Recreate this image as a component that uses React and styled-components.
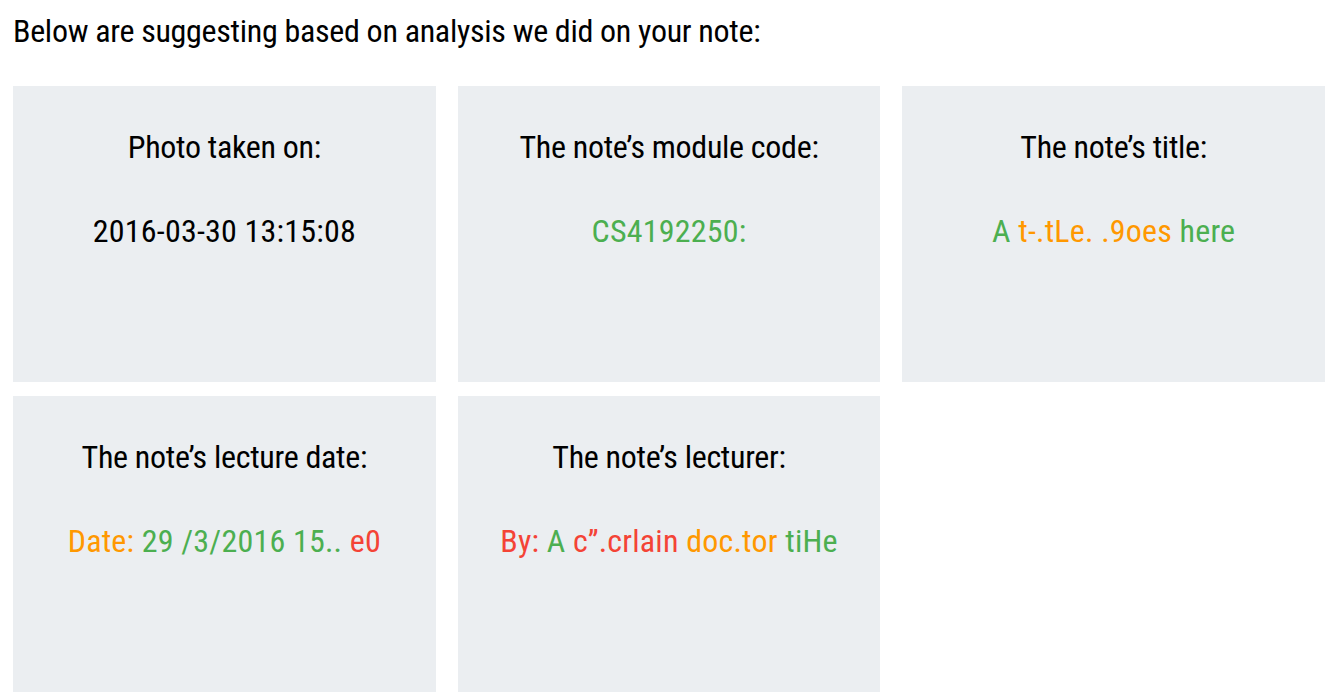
import React from 'react';
import styled, { createGlobalStyle } from 'styled-components';

const GlobalStyle = createGlobalStyle`
  body {
    margin: 0;
    background: #ffffff;
    font-family: "Roboto Condensed", "Open Sans Condensed", "DejaVu Sans Condensed", sans-serif;
    color: #000000;
  }
`;

const Page = styled.div`
  padding: 11px 5px 0 13px;
`;

const Intro = styled.p`
  font-size: 32px;
  line-height: 40px;
  letter-spacing: -0.3px;
  margin: 0 0 35px 0;
`;

const CardGrid = styled.div`
  display: grid;
  grid-template-columns: repeat(3, 1fr);
  column-gap: 22px;
  row-gap: 14px;
`;

const Card = styled.div`
  background: #ebeef1;
  height: 296px;
  padding: 41px 16px 0;
  box-sizing: border-box;
  text-align: center;
`;

const CardTitle = styled.h3`
  font-size: 32px;
  font-weight: normal;
  line-height: 40px;
  letter-spacing: -0.3px;
  margin: 0 0 44px 0;
`;

const CardValue = styled.p`
  font-size: 32px;
  line-height: 40px;
  letter-spacing: 0.2px;
  margin: 0;
`;

const Word = styled.span`
  color: ${(p) => p.$color};
`;

const GREEN = '#4caf50';
const ORANGE = '#ff9800';
const RED = '#f44336';
const BLACK = '#000000';

const cards = [
  { title: 'Photo taken on:', value: [['2016-03-30 13:15:08', BLACK]] },
  { title: 'The note\u2019s module code:', value: [['CS4192250:', GREEN]] },
  {
    title: 'The note\u2019s title:',
    value: [['A ', GREEN], ['t-.tLe. .9oes ', ORANGE], ['here', GREEN]],
  },
  {
    title: 'The note\u2019s lecture date:',
    value: [['Date: ', ORANGE], ['29 /3/2016 15.. ', GREEN], ['e0', RED]],
  },
  {
    title: 'The note\u2019s lecturer:',
    value: [
      ['By: ', RED],
      ['A ', GREEN],
      ['c\u201d.crlain ', RED],
      ['doc.tor ', ORANGE],
      ['tiHe', GREEN],
    ],
  },
];

const App = () => {
  return (
    <Page>
      <GlobalStyle />
      <Intro>Below are suggesting based on analysis we did on your note:</Intro>
      <CardGrid>
        {cards.map((card, index) => (
          <Card key={index}>
            <CardTitle>{card.title}</CardTitle>
            <CardValue>
              {card.value.map(([text, color], i) => (
                <Word key={i} $color={color}>
                  {text}
                </Word>
              ))}
            </CardValue>
          </Card>
        ))}
      </CardGrid>
    </Page>
  );
};

export default App;
